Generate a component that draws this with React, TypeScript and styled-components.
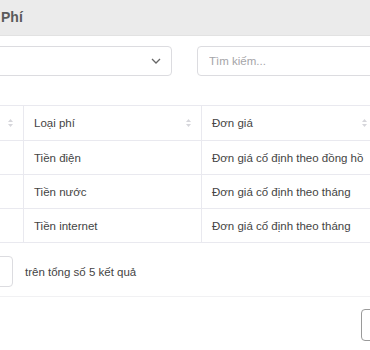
import styled, { createGlobalStyle } from "styled-components";

const GlobalStyle = createGlobalStyle`
  html, body {
    margin: 0;
    padding: 0;
    background: #ffffff;
    overflow: hidden;
  }
  body {
    width: 370px;
    height: 350px;
    font-family: "Liberation Sans", Arial, sans-serif;
    color: #444;
  }
`;

const rows = [
  { type: "Tiền điện", price: "Đơn giá cố định theo đồng hồ" },
  { type: "Tiền nước", price: "Đơn giá cố định theo tháng" },
  { type: "Tiền internet", price: "Đơn giá cố định theo tháng" },
];

const columns = [
  { label: "", width: 43 },
  { label: "Loại phí", width: 178 },
  { label: "Đơn giá", width: 176 },
  { label: "", width: 120 },
];

const SortIcon = () => (
  <svg width="7" height="10" viewBox="0 0 7 10">
    <path d="M3.5 1 L6 4 L1 4 Z" fill="#d6d6db" />
    <path d="M3.5 9 L6 6 L1 6 Z" fill="#d6d6db" />
  </svg>
);

const Chevron = () => (
  <svg width="10" height="6" viewBox="0 0 10 6">
    <path d="M1 1 L5 5 L9 1" fill="none" stroke="#666" strokeWidth="1.3" />
  </svg>
);

const App = () => {
  return (
    <>
      <GlobalStyle />
      <Page>
        <TitleBar>Phí</TitleBar>
        <Toolbar>
          <Select>
            <Chevron />
          </Select>
          <Search placeholder="Tìm kiếm..." />
        </Toolbar>
        <Table>
          <colgroup>
            {columns.map((c, i) => (
              <col key={i} style={{ width: c.width }} />
            ))}
          </colgroup>
          <thead>
            <tr>
              {columns.map((c, i) => (
                <Th key={i}>
                  <HeadCell>
                    <span>{c.label}</span>
                    <SortIcon />
                  </HeadCell>
                </Th>
              ))}
            </tr>
          </thead>
          <tbody>
            {rows.map((r, i) => (
              <tr key={i}>
                <Td></Td>
                <Td>{r.type}</Td>
                <Td>{r.price}</Td>
                <Td></Td>
              </tr>
            ))}
          </tbody>
        </Table>
        <Pager>
          <PageSize />
          <PagerText>trên tổng số 5 kết quả</PagerText>
        </Pager>
        <Footer>
          <FooterButton />
        </Footer>
      </Page>
    </>
  );
};

const Page = styled.div`
  width: 560px;
  margin-left: -40px;
`;

const TitleBar = styled.div`
  height: 35px;
  line-height: 35px;
  padding-left: 41px;
  background: #ebebeb;
  border-bottom: 1px solid #e2e2e2;
  font-size: 14px;
  font-weight: 600;
  color: #5a5a5a;
`;

const Toolbar = styled.div`
  display: flex;
  gap: 25px;
  margin-top: 10px;
  padding-left: 20px;
`;

const Select = styled.div`
  box-sizing: border-box;
  width: 192px;
  height: 30px;
  border: 1px solid #dcdce0;
  border-radius: 4px;
  display: flex;
  align-items: center;
  justify-content: flex-end;
  padding-right: 10px;
`;

const Search = styled.input`
  box-sizing: border-box;
  width: 200px;
  height: 30px;
  border: 1px solid #dcdce0;
  border-radius: 4px;
  padding: 0 11px;
  font-family: "Liberation Sans", Arial, sans-serif;
  font-size: 11.5px;
  outline: none;
  &::placeholder {
    color: #a5a5a8;
  }
`;

const Table = styled.table`
  width: 517px;
  margin-top: 29px;
  margin-left: 20px;
  border-collapse: collapse;
  table-layout: fixed;
  font-size: 11.5px;
  color: #444;
`;

const Th = styled.th`
  height: 34px;
  padding: 0 9px 0 10px;
  border: 1px solid #e9e9ef;
  font-weight: normal;
  text-align: left;
`;

const HeadCell = styled.div`
  display: flex;
  align-items: center;
  justify-content: space-between;
`;

const Td = styled.td`
  height: 33px;
  padding: 0 10px;
  border: 1px solid #e9e9ef;
  white-space: nowrap;
  overflow: hidden;
`;

const Pager = styled.div`
  display: flex;
  align-items: center;
  gap: 12px;
  margin-top: 13px;
  padding-left: 20px;
  padding-bottom: 9px;
  border-bottom: 1px solid #f1f1f3;
`;

const PageSize = styled.div`
  box-sizing: border-box;
  width: 33px;
  height: 31px;
  border: 1px solid #dcdce0;
  border-radius: 4px;
`;

const PagerText = styled.span`
  font-size: 11.5px;
  color: #444;
`;

const Footer = styled.div`
  display: flex;
  padding-top: 12px;
  padding-left: 401px;
`;

const FooterButton = styled.button`
  box-sizing: border-box;
  width: 60px;
  height: 32px;
  border: 1px solid #9a9a9a;
  border-radius: 4px;
  background: #fff;
`;

export default App;
